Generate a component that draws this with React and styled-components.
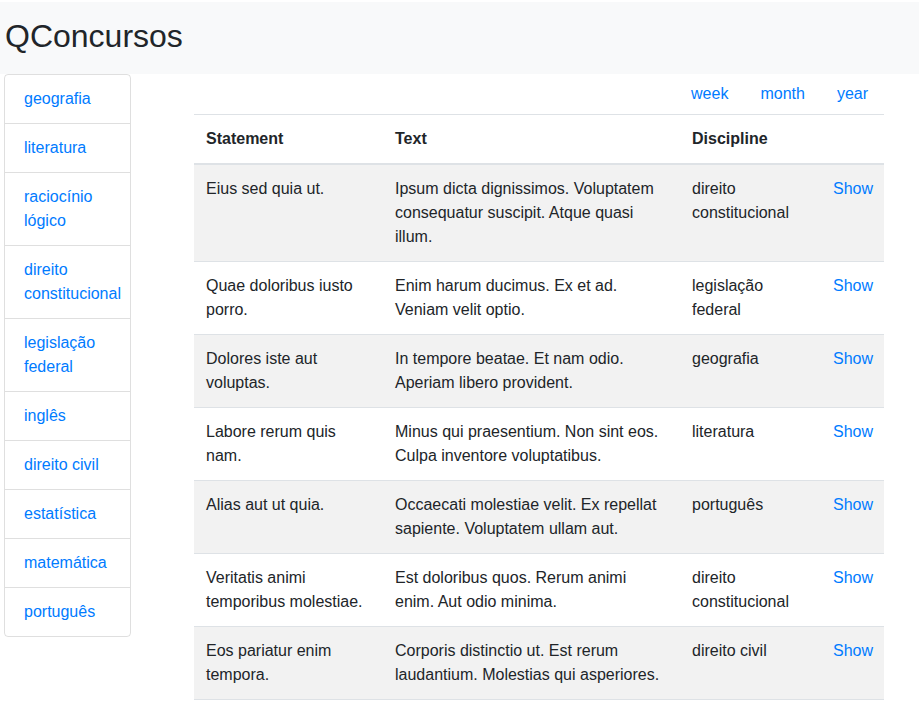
import React from "react";
import styled, { createGlobalStyle } from "styled-components";

const GlobalStyle = createGlobalStyle`
  body {
    margin: 0;
    font-family: "Liberation Sans", Arial, sans-serif;
    font-size: 16px;
    line-height: 1.5;
    color: #212529;
    background: #fff;
  }
  * { box-sizing: border-box; }
`;

const disciplines = [
  "geografia",
  "literatura",
  "raciocínio lógico",
  "direito constitucional",
  "legislação federal",
  "inglês",
  "direito civil",
  "estatística",
  "matemática",
  "português",
];

const questions = [
  ["Eius sed quia ut.", "Ipsum dicta dignissimos. Voluptatem consequatur suscipit. Atque quasi illum.", "direito constitucional"],
  ["Quae doloribus iusto porro.", "Enim harum ducimus. Ex et ad. Veniam velit optio.", "legislação federal"],
  ["Dolores iste aut voluptas.", "In tempore beatae. Et nam odio. Aperiam libero provident.", "geografia"],
  ["Labore rerum quis nam.", "Minus qui praesentium. Non sint eos. Culpa inventore voluptatibus.", "literatura"],
  ["Alias aut ut quia.", "Occaecati molestiae velit. Ex repellat sapiente. Voluptatem ullam aut.", "português"],
  ["Veritatis animi temporibus molestiae.", "Est doloribus quos. Rerum animi enim. Aut odio minima.", "direito constitucional"],
  ["Eos pariatur enim tempora.", "Corporis distinctio ut. Est rerum laudantium. Molestias qui asperiores.", "direito civil"],
];

const Navbar = styled.header`
  margin-top: 2px;
  height: 72px;
  background: #f8f9fa;
  padding: 15px 5px 0;
`;

const Brand = styled.h1`
  margin: 0;
  font-size: 32px;
  font-weight: 400;
  line-height: 1.2;
`;

const Layout = styled.div`
  display: flex;
  align-items: flex-start;
  padding-left: 4px;
`;

const ListGroup = styled.ul`
  width: 127px;
  margin: 0;
  padding: 0;
  list-style: none;
  border: 1px solid rgba(0, 0, 0, 0.125);
  border-radius: 4px;
`;

const ListItem = styled.li`
  padding: 12px 19px;
  border-top: ${(p) => (p.$first ? "none" : "1px solid rgba(0, 0, 0, 0.125)")};
`;

const Link = styled.a`
  color: #007bff;
  text-decoration: none;
  cursor: pointer;
`;

const Main = styled.main`
  width: 690px;
  margin-left: 63px;
`;

const PeriodNav = styled.nav`
  display: flex;
  justify-content: flex-end;
`;

const PeriodLink = styled(Link)`
  display: block;
  padding: 8px 16px;
`;

const Table = styled.table`
  width: 100%;
  border-collapse: collapse;
  table-layout: fixed;
`;

const Th = styled.th`
  width: ${(p) => p.$w};
  padding: 12px;
  text-align: left;
  font-weight: 700;
  border-top: 1px solid #dee2e6;
  border-bottom: 2px solid #dee2e6;
  vertical-align: bottom;
`;

const Row = styled.tr`
  background: ${(p) => (p.$striped ? "rgba(0, 0, 0, 0.05)" : "transparent")};
`;

const Td = styled.td`
  padding: 12px;
  vertical-align: top;
  border-top: 1px solid #dee2e6;
  border-bottom: ${(p) => (p.$last ? "1px solid #dee2e6" : "none")};
`;

export default function App() {
  return (
    <>
      <GlobalStyle />
      <Navbar>
        <Brand>QConcursos</Brand>
      </Navbar>
      <Layout>
        <ListGroup>
          {disciplines.map((d, i) => (
            <ListItem key={d} $first={i === 0}>
              <Link>{d}</Link>
            </ListItem>
          ))}
        </ListGroup>
        <Main>
          <PeriodNav>
            <PeriodLink>week</PeriodLink>
            <PeriodLink>month</PeriodLink>
            <PeriodLink>year</PeriodLink>
          </PeriodNav>
          <Table>
            <thead>
              <tr>
                <Th $w="189px">Statement</Th>
                <Th $w="297px">Text</Th>
                <Th $w="141px">Discipline</Th>
                <Th $w="63px"></Th>
              </tr>
            </thead>
            <tbody>
              {questions.map(([s, t, d], i) => {
                const last = i === questions.length - 1;
                return (
                  <Row key={s} $striped={i % 2 === 0}>
                    <Td $last={last}>{s}</Td>
                    <Td $last={last}>{t}</Td>
                    <Td $last={last}>{d}</Td>
                    <Td $last={last}>
                      <Link>Show</Link>
                    </Td>
                  </Row>
                );
              })}
            </tbody>
          </Table>
        </Main>
      </Layout>
    </>
  );
}
